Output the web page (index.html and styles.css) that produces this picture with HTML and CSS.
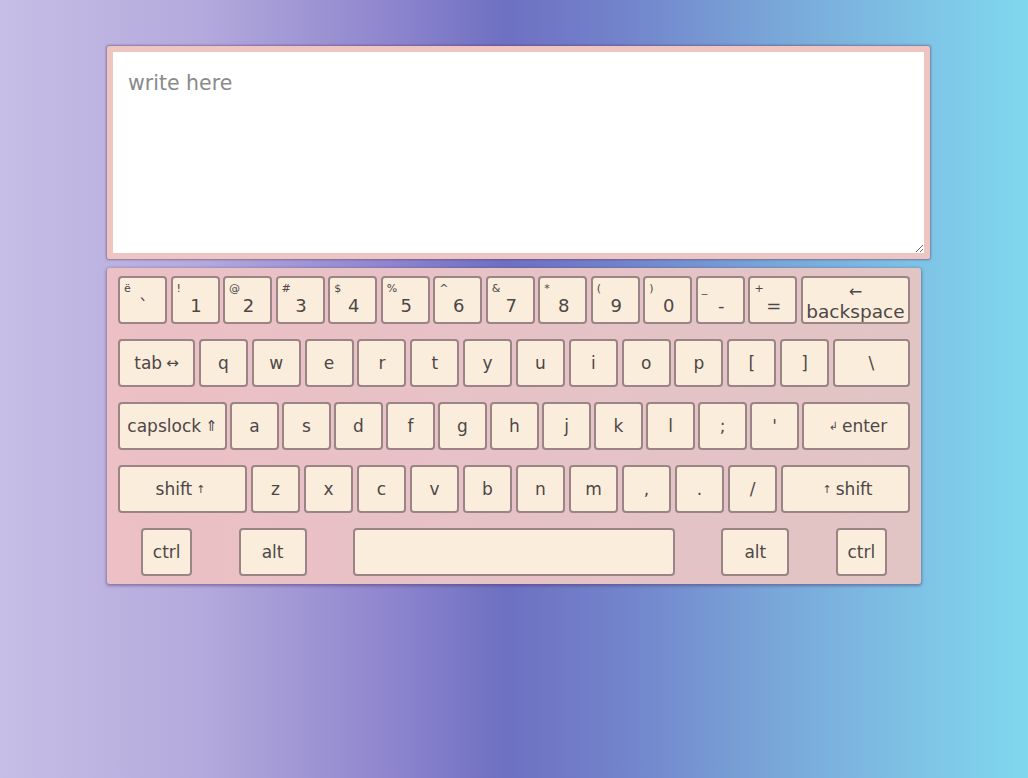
FILE: index.html
```html
<!DOCTYPE html>
<html>
<head>
<meta charset="utf-8">
<link rel="stylesheet" href="styles.css">
</head>
<body>
<div class="wrap">
  <textarea class="pad" placeholder="write here"></textarea>
  <div class="keyboard">
    <div class="row">
      <div class="key dual"><span class="sub">ë</span><span class="main">`</span></div>
      <div class="key dual"><span class="sub">!</span><span class="main">1</span></div>
      <div class="key dual"><span class="sub">@</span><span class="main">2</span></div>
      <div class="key dual"><span class="sub">#</span><span class="main">3</span></div>
      <div class="key dual"><span class="sub">$</span><span class="main">4</span></div>
      <div class="key dual"><span class="sub">%</span><span class="main">5</span></div>
      <div class="key dual"><span class="sub">^</span><span class="main">6</span></div>
      <div class="key dual"><span class="sub">&amp;</span><span class="main">7</span></div>
      <div class="key dual"><span class="sub">*</span><span class="main">8</span></div>
      <div class="key dual"><span class="sub">(</span><span class="main">9</span></div>
      <div class="key dual"><span class="sub">)</span><span class="main">0</span></div>
      <div class="key dual"><span class="sub">_</span><span class="main">-</span></div>
      <div class="key dual"><span class="sub">+</span><span class="main">=</span></div>
      <div class="key backspace"><span class="arr">←</span><span class="lbl">backspace</span></div>
    </div>
    <div class="row">
      <div class="key tab">tab <span class="sym">↔</span></div>
      <div class="key">q</div>
      <div class="key">w</div>
      <div class="key">e</div>
      <div class="key">r</div>
      <div class="key">t</div>
      <div class="key">y</div>
      <div class="key">u</div>
      <div class="key">i</div>
      <div class="key">o</div>
      <div class="key">p</div>
      <div class="key">[</div>
      <div class="key">]</div>
      <div class="key tab">\</div>
    </div>
    <div class="row">
      <div class="key caps">capslock <span class="sym">⇑</span></div>
      <div class="key">a</div>
      <div class="key">s</div>
      <div class="key">d</div>
      <div class="key">f</div>
      <div class="key">g</div>
      <div class="key">h</div>
      <div class="key">j</div>
      <div class="key">k</div>
      <div class="key">l</div>
      <div class="key">;</div>
      <div class="key">'</div>
      <div class="key enter"><span class="sym small">↲</span> enter</div>
    </div>
    <div class="row">
      <div class="key shift">shift <span class="sym small">↑</span></div>
      <div class="key">z</div>
      <div class="key">x</div>
      <div class="key">c</div>
      <div class="key">v</div>
      <div class="key">b</div>
      <div class="key">n</div>
      <div class="key">m</div>
      <div class="key">,</div>
      <div class="key">.</div>
      <div class="key">/</div>
      <div class="key shift"><span class="sym small">↑</span> shift</div>
    </div>
    <div class="row bottom">
      <div class="key ctrl">ctrl</div>
      <div class="key alt">alt</div>
      <div class="key space"></div>
      <div class="key alt">alt</div>
      <div class="key ctrl">ctrl</div>
    </div>
  </div>
</div>
</body>
</html>
```
FILE: styles.css
```css
html, body {
  margin: 0;
  height: 100%;
}
body {
  background: linear-gradient(90deg, #c6bee6 0%, #b3a9dc 20%, #8e85ce 38%, #6e70c1 49%, #7282cb 60%, #79a6d8 75%, #7ec4e6 90%, #7fd8ee 100%);
  font-family: "DejaVu Sans", sans-serif;
  overflow: hidden;
}
.wrap {
  width: 814px;
  margin: 0 auto;
  padding-top: 46px;
}
.pad {
  display: block;
  box-sizing: border-box;
  width: 823px;
  height: 213px;
  margin: 0 0 9px 0;
  border: 6px solid #efc5c1;
  border-radius: 2px;
  box-shadow: 0 0 2px 1px rgba(90, 60, 110, 0.5);
  background: #fff;
  padding: 19px 15px 16px;
  font-family: "DejaVu Sans", sans-serif;
  font-size: 20.5px;
  color: #444;
  resize: vertical;
  outline: none;
}
.pad::placeholder {
  color: #8a8a8a;
}
.keyboard {
  box-sizing: border-box;
  width: 814px;
  height: 316px;
  padding: 8px 11px;
  background: linear-gradient(90deg, #ecc0c5 0%, #e6c2c6 50%, #e1c5c5 100%);
  border-radius: 3px;
  box-shadow: 0 1px 3px 1px rgba(70, 50, 100, 0.45);
  display: flex;
  flex-direction: column;
  gap: 15px;
}
.row {
  display: flex;
  justify-content: space-between;
  height: 48px;
}
.row.bottom {
  justify-content: space-around;
}
.key {
  box-sizing: border-box;
  width: 49px;
  height: 48px;
  background: #fbeddc;
  border: 2px solid #9a8486;
  border-radius: 4px;
  color: #4d4747;
  font-size: 17px;
  display: flex;
  align-items: center;
  justify-content: center;
  white-space: nowrap;
}
.key.dual {
  flex-direction: column;
  align-items: stretch;
  justify-content: flex-start;
}
.sub {
  font-size: 11px;
  line-height: 12px;
  padding: 5px 0 0 4px;
  text-align: left;
}
.main {
  font-size: 18px;
  line-height: 22px;
  text-align: center;
  padding-left: 2px;
}
.backspace {
  width: 109px;
  flex-direction: column;
  justify-content: flex-start;
  padding-top: 5px;
}
.arr {
  font-size: 16px;
  line-height: 18px;
}
.lbl {
  font-size: 18.5px;
  line-height: 22px;
}
.tab { width: 77px; }
.caps { width: 109px; }
.enter { width: 108px; }
.shift { width: 129px; }
.ctrl { width: 51px; }
.alt { width: 68px; }
.space { width: 322px; }
.sym {
  margin-left: 4px;
  font-size: 15px;
}
.sym.small {
  font-size: 11px;
  margin: 0 4px;
}
```
